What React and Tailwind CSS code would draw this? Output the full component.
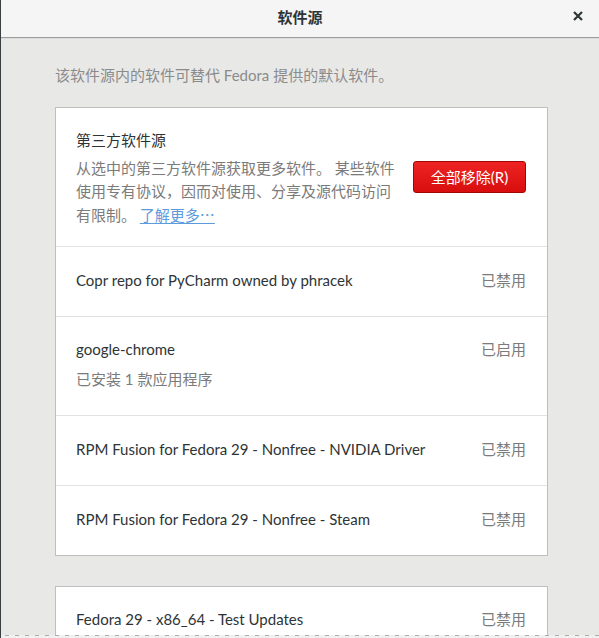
import React from "react";

const font = { fontFamily: 'Lato, "Noto Sans CJK SC", sans-serif' };

const repos = [
  { name: "Copr repo for PyCharm owned by phracek", status: "已禁用" },
  { name: "google-chrome", status: "已启用", note: "已安装 1 款应用程序" },
  { name: "RPM Fusion for Fedora 29 - Nonfree - NVIDIA Driver", status: "已禁用" },
  { name: "RPM Fusion for Fedora 29 - Nonfree - Steam", status: "已禁用" },
];

const RepoRow = ({ repo }) => {
  if (repo.note) {
    return (
      <div className="flex justify-between border-t border-[#e2e2e2] pl-5 pr-[21px] pt-[22px] pb-[26px]">
        <div className="flex flex-col">
          <span className="text-[15px] leading-[20px] text-[#2e3436]">{repo.name}</span>
          <span className="mt-[10px] text-[15px] leading-[20px] text-[#7b7b7b]">{repo.note}</span>
        </div>
        <span className="text-[15px] leading-[20px] text-[#7b7b7b]">{repo.status}</span>
      </div>
    );
  }
  return (
    <div className="flex h-[70px] items-center justify-between border-t border-[#e2e2e2] pl-5 pr-[21px] pb-[4px]">
      <span className="text-[15px] leading-[20px] text-[#2e3436]">{repo.name}</span>
      <span className="text-[15px] leading-[20px] text-[#7b7b7b]">{repo.status}</span>
    </div>
  );
};

export default function App() {
  return (
    <div style={font} className="flex h-[638px] w-[599px] overflow-hidden bg-[#e8e8e7]">
      <div className="w-px shrink-0 bg-[#3a3f41]" />
      <div className="flex min-w-0 flex-1 flex-col">
        {/* title bar */}
        <div className="relative flex h-[38px] shrink-0 items-center justify-center border-b border-[#9c9c9c] bg-[#f5f5f5] pb-[3px]">
          <span className="text-[15px] font-bold leading-[20px] text-[#2e3436]">软件源</span>
          <svg className="absolute right-[16px] top-[11px]" width="10" height="10" viewBox="0 0 10 10">
            <path d="M1 1 L9 9 M9 1 L1 9" stroke="#2e3436" strokeWidth="2.2" />
          </svg>
        </div>

        <div className="flex min-h-0 flex-1 flex-col overflow-hidden border-t border-[#dcdcdc] pl-[54px] pr-[51px] pt-[26px]">
          <p className="text-[15px] leading-[20px] text-[#8b8b8b]">
            该软件源内的软件可替代 Fedora 提供的默认软件。
          </p>

          <div className="mt-[22px] flex flex-col border border-[#bfbfbf] bg-white">
            <div className="flex h-[138px] items-start justify-between pl-5 pr-[21px] pt-[22px]">
              <div className="flex flex-col">
                <span className="text-[15px] leading-[20px] text-[#2e3436]">第三方软件源</span>
                <p className="mt-[7px] text-[15px] leading-[23px] text-[#7b7b7b]">
                  从选中的第三方软件源获取更多软件。 某些软件
                  <br />
                  使用专有协议，因而对使用、分享及源代码访问
                  <br />
                  有限制。{" "}
                  <span className="text-[#5d9bdc] underline underline-offset-2" style={{ fontFamily: '"Noto Sans CJK SC", sans-serif' }}>
                    了解更多…
                  </span>
                </p>
              </div>
              <button className="mt-[31px] flex h-[32px] w-[113px] items-center justify-center rounded-[3px] border border-[#a10705] bg-gradient-to-b from-[#ee2222] to-[#d80d0d] text-[15px] leading-[20px] text-white">
                全部移除(R)
              </button>
            </div>
            {repos.map((repo) => (
              <RepoRow key={repo.name} repo={repo} />
            ))}
          </div>

          <div className="mt-[30px] flex shrink-0 flex-col border border-[#bfbfbf] bg-white">
            <div className="flex h-[70px] items-center justify-between pl-5 pr-[21px] pb-[6px]">
              <span className="text-[15px] leading-[20px] text-[#2e3436]">Fedora 29 - x86_64 - Test Updates</span>
              <span className="text-[15px] leading-[20px] text-[#7b7b7b]">已禁用</span>
            </div>
          </div>
        </div>

        <div className="h-[3px] shrink-0 bg-[#f0f0f0]">
          <div className="ml-[4px] h-px bg-[repeating-linear-gradient(90deg,#adadad_0px,#adadad_4px,transparent_4px,transparent_10px)]" />
        </div>
      </div>
    </div>
  );
}
